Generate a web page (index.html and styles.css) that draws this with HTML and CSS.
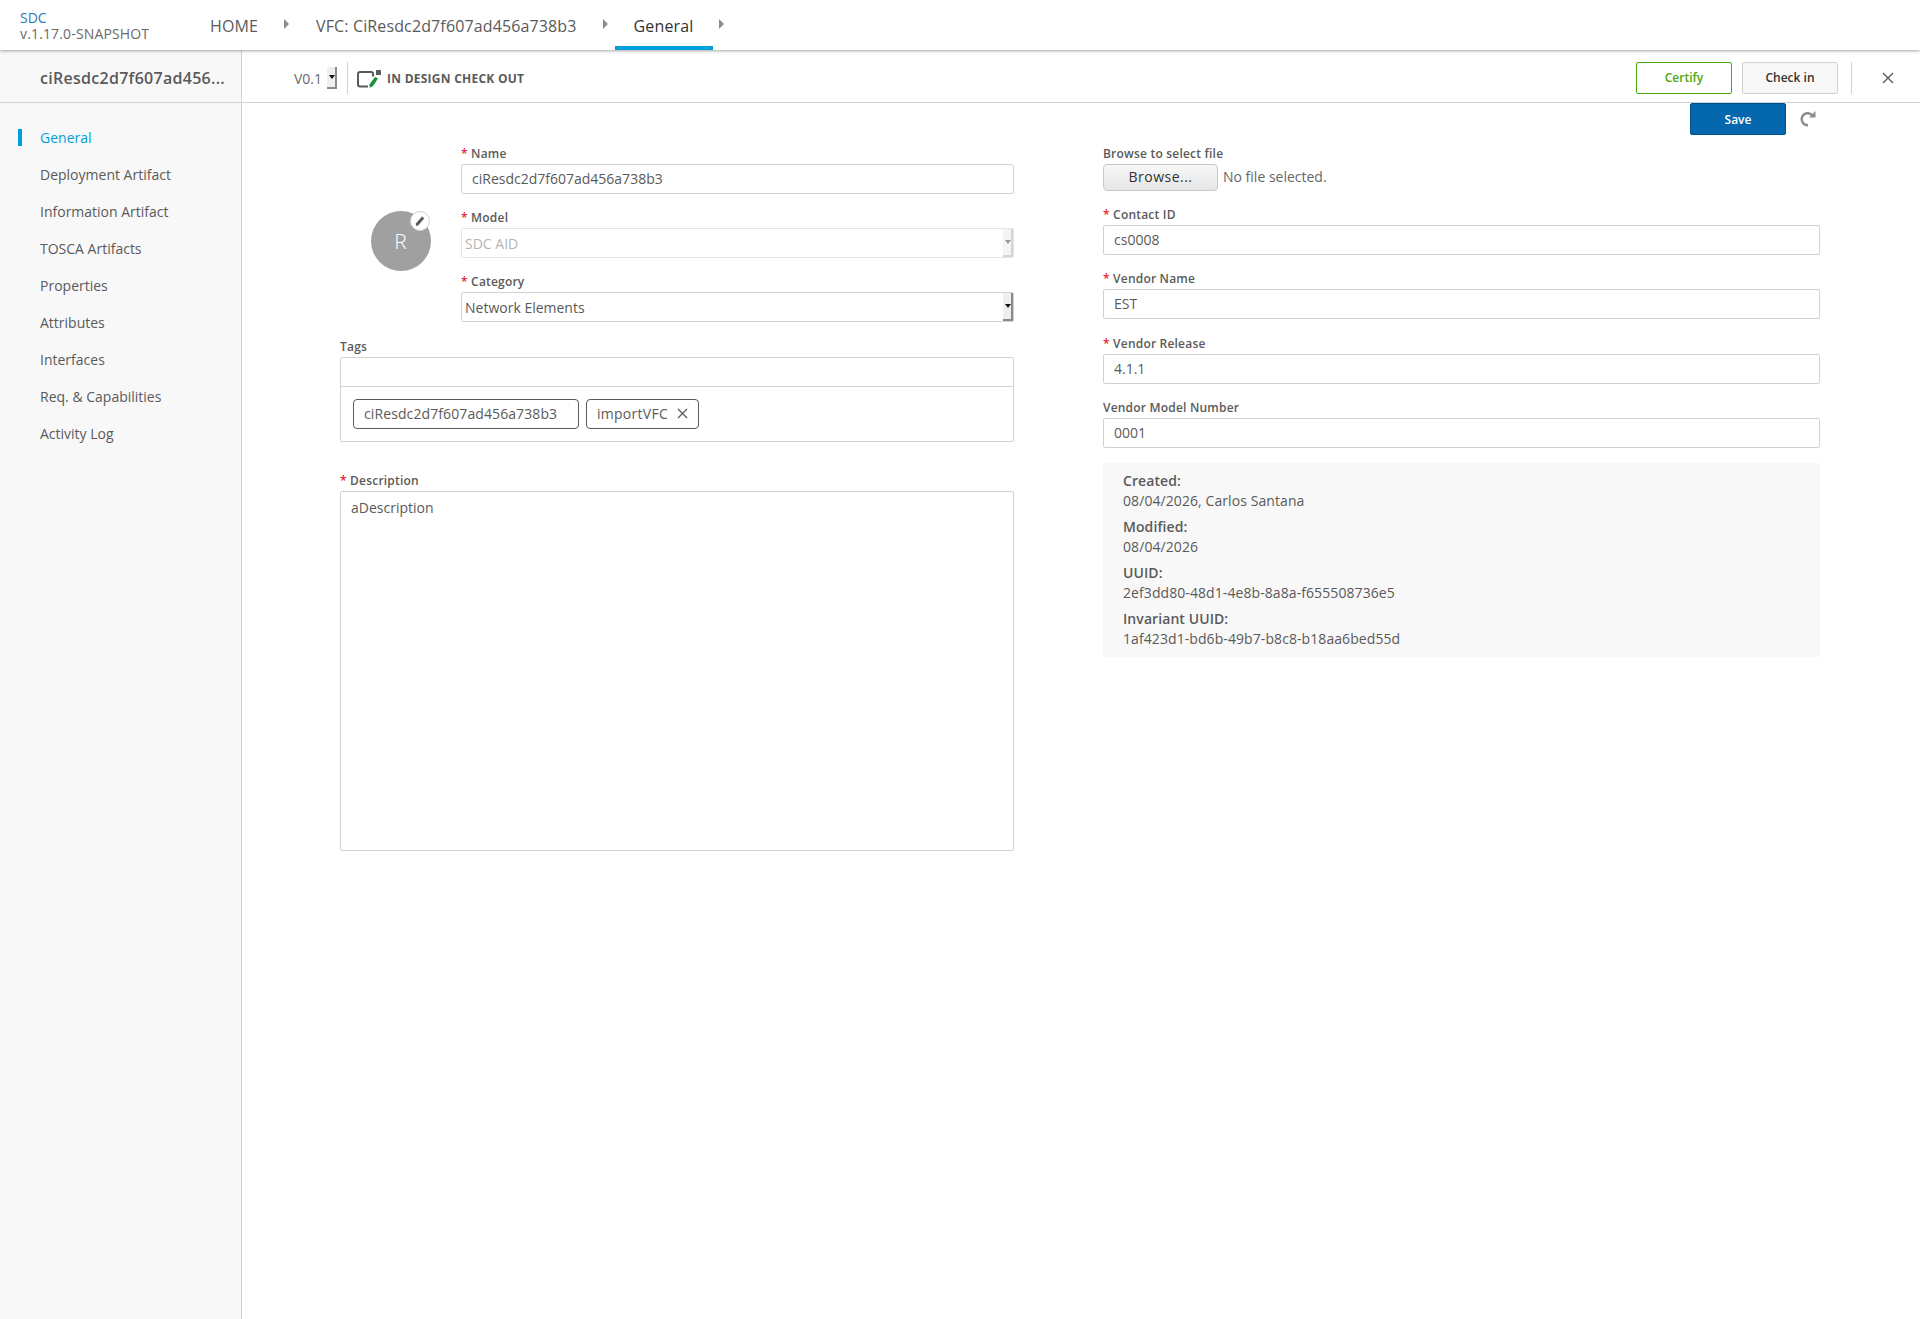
FILE: index.html
```html
<!DOCTYPE html>
<html lang="en">
<head>
    <meta charset="UTF-8">
    <title>SDC - General</title>
    <link rel="stylesheet" href="styles.css">
</head>
<body>
    <header class="top-bar">
        <div class="brand">
            <div class="brand-name">SDC</div>
            <div class="brand-version">v.1.17.0-SNAPSHOT</div>
        </div>
        <nav class="crumbs">
            <a class="crumb">HOME</a>
            <span class="crumb-arrow"></span>
            <a class="crumb">VFC: CiResdc2d7f607ad456a738b3</a>
            <span class="crumb-arrow"></span>
            <a class="crumb crumb-active">General</a>
            <span class="crumb-arrow"></span>
        </nav>
    </header>

    <div class="sub-bar">
        <div class="sub-title">ciResdc2d7f607ad456...</div>
        <div class="sub-main">
            <span class="version">V0.1</span>
            <span class="spin spin-small"></span>
            <span class="sub-sep"></span>
            <svg class="status-icon" width="25" height="18" viewBox="0 0 25 18">
                <path d="M11 16.5H3a2 2 0 0 1-2-2V4a2 2 0 0 1 2-2h11a2 2 0 0 1 2 2v2.5" fill="none" stroke="#5a5a5a" stroke-width="2"/>
                <path d="M18 7l3 1.5-5.2 7.7-3.3 1.6.2-3.6z" fill="#1a8a3c"/>
                <rect x="19" y="0" width="5" height="5" rx="0.5" fill="#5a5a5a"/>
            </svg>
            <span class="status-text">IN DESIGN CHECK OUT</span>
            <div class="sub-actions">
                <button class="btn btn-certify">Certify</button>
                <button class="btn btn-checkin">Check in</button>
                <span class="sub-sep sub-sep-right"></span>
                <svg class="close-icon" width="12" height="12" viewBox="0 0 12 12">
                    <path d="M1 1l10 10M11 1L1 11" stroke="#5a5a5a" stroke-width="1.4" fill="none"/>
                </svg>
            </div>
        </div>
    </div>

    <div class="page">
        <aside class="side-nav">
            <a class="side-item side-active">General</a>
            <a class="side-item">Deployment Artifact</a>
            <a class="side-item">Information Artifact</a>
            <a class="side-item">TOSCA Artifacts</a>
            <a class="side-item">Properties</a>
            <a class="side-item">Attributes</a>
            <a class="side-item">Interfaces</a>
            <a class="side-item">Req. &amp; Capabilities</a>
            <a class="side-item">Activity Log</a>
        </aside>

        <main class="content">
            <div class="save-row">
                <button class="btn btn-save">Save</button>
                <svg class="revert-icon" width="16" height="16" viewBox="0 0 16 16">
                    <path d="M12.4 4.4A6 6 0 1 0 8 14.2" fill="none" stroke="#8c8c8c" stroke-width="2.4"/>
                    <path d="M9 6.5H15.5V0z" fill="#8c8c8c"/>
                </svg>
            </div>

            <form class="form-grid">
                <div class="col-left">
                    <div class="head-block">
                        <div class="avatar-cell">
                            <div class="avatar">R
                                <span class="avatar-edit">
                                    <svg width="10" height="10" viewBox="0 0 10 10">
                                        <path d="M7 .6l2.3 1.6L3.4 9.2.8 10l.3-2.7z" fill="#5a5a5a"/>
                                    </svg>
                                </span>
                            </div>
                        </div>
                        <div class="head-fields">
                            <div class="field">
                                <label class="lbl req">Name</label>
                                <input class="txt" value="ciResdc2d7f607ad456a738b3">
                            </div>
                            <div class="field">
                                <label class="lbl req">Model</label>
                                <div class="pick pick-off">
                                    <select class="pick-value" disabled><option>SDC AID</option></select>
                                    <span class="spin"></span>
                                </div>
                            </div>
                            <div class="field">
                                <label class="lbl req">Category</label>
                                <div class="pick">
                                    <select class="pick-value"><option>Network Elements</option></select>
                                    <span class="spin"></span>
                                </div>
                            </div>
                        </div>
                    </div>

                    <div class="field-tags">
                        <label class="lbl">Tags</label>
                        <div class="tags-box">
                            <input class="tags-input">
                            <div class="tags-list">
                                <span class="tag">ciResdc2d7f607ad456a738b3</span>
                                <span class="tag tag-close">importVFC
                                    <svg width="11" height="11" viewBox="0 0 11 11">
                                        <path d="M1 1l9 9M10 1l-9 9" stroke="#5a5a5a" stroke-width="1.3" fill="none"/>
                                    </svg>
                                </span>
                            </div>
                        </div>
                    </div>

                    <div class="field-desc">
                        <label class="lbl req">Description</label>
                        <textarea class="desc">aDescription</textarea>
                    </div>
                </div>

                <div class="col-right">
                    <div class="field-file">
                        <label class="lbl">Browse to select file</label>
                        <div class="file-row">
                            <button type="button" class="file-btn">Browse...</button>
                            <span class="file-name">No file selected.</span>
                        </div>
                    </div>
                    <div class="field">
                        <label class="lbl req">Contact ID</label>
                        <input class="txt" value="cs0008">
                    </div>
                    <div class="field">
                        <label class="lbl req">Vendor Name</label>
                        <input class="txt" value="EST">
                    </div>
                    <div class="field">
                        <label class="lbl req">Vendor Release</label>
                        <input class="txt" value="4.1.1">
                    </div>
                    <div class="field">
                        <label class="lbl">Vendor Model Number</label>
                        <input class="txt" value="0001">
                    </div>
                    <div class="info-box">
                        <div class="info-item">
                            <div class="info-key">Created:</div>
                            <div>08/04/2026, Carlos Santana</div>
                        </div>
                        <div class="info-item">
                            <div class="info-key">Modified:</div>
                            <div>08/04/2026</div>
                        </div>
                        <div class="info-item">
                            <div class="info-key">UUID:</div>
                            <div>2ef3dd80-48d1-4e8b-8a8a-f655508736e5</div>
                        </div>
                        <div class="info-item">
                            <div class="info-key">Invariant UUID:</div>
                            <div>1af423d1-bd6b-49b7-b8c8-b18aa6bed55d</div>
                        </div>
                    </div>
                </div>
            </form>
        </main>
    </div>
</body>
</html>
```

FILE: styles.css
```css
* {
    box-sizing: border-box;
}
html, body {
    height: 100%;
}
body {
    display: flex;
    flex-direction: column;
    margin: 0;
    overflow: hidden;
    background-color: #fff;
    font-family: "Open Sans", sans-serif;
    font-size: 14px;
    color: #5a5a5a;
}

/* top bar */
.top-bar {
    position: relative;
    z-index: 2;
    display: flex;
    flex: none;
    height: 50px;
    background-color: #fff;
    box-shadow: 0 1px 3px rgba(0, 0, 0, 0.35);
}
.brand {
    width: 190px;
    padding: 9px 0 0 20px;
    line-height: 17px;
}
.brand-name {
    font-size: 14px;
    color: #2e77b5;
}
.brand-version {
    font-size: 14px;
    line-height: 15px;
    letter-spacing: 0.15px;
    color: #6a6a6a;
}
.crumbs {
    display: flex;
}
.crumb {
    display: flex;
    align-items: center;
    height: 50px;
    padding: 2px 20px 0;
    font-size: 16px;
    letter-spacing: 0.13px;
}
.crumb-active {
    padding: 6px 20px 0 19px;
    border-bottom: 4px solid #009fdb;
    color: #333;
}
.crumb-arrow {
    position: relative;
    width: 18px;
    height: 12px;
    margin-top: 18px;
}
.crumb-arrow::after {
    content: "";
    position: absolute;
    left: 6px;
    top: 1px;
    border-left: 5px solid #8c8c8c;
    border-top: 5px solid transparent;
    border-bottom: 5px solid transparent;
}

/* second bar */
.sub-bar {
    display: flex;
    flex: none;
    height: 53px;
    border-bottom: 1px solid #d2d2d2;
}
.sub-title {
    width: 242px;
    padding: 2px 0 0 40px;
    border-right: 1px solid #d2d2d2;
    background-color: #f8f8f8;
    font-size: 16px;
    font-weight: 600;
    line-height: 52px;
    letter-spacing: 0.28px;
    white-space: nowrap;
}
.sub-main {
    display: flex;
    flex: 1;
    align-items: center;
    padding: 3px 26px 0 52px;
}
.version {
    padding-top: 2px;
    font-size: 14px;
    color: #6a6a6a;
}
.spin {
    position: relative;
    flex: none;
    width: 10px;
    height: 100%;
    border-right: 2px solid #8a8a8a;
    border-bottom: 2px solid #8a8a8a;
    background-color: #efefef;
}
.spin::after {
    content: "";
    position: absolute;
    left: 2px;
    top: 50%;
    margin-top: -2px;
    border-top: 4px solid #111;
    border-left: 3px solid transparent;
    border-right: 3px solid transparent;
}
.spin-small {
    height: 22px;
    margin-left: 5px;
}
.sub-sep {
    flex: none;
    width: 1px;
    height: 32px;
    margin: 0 10px;
    background-color: #d2d2d2;
}
.status-icon {
    flex: none;
    margin: 2px 0 0 -1px;
}
.status-text {
    margin-left: 5px;
    padding-top: 2px;
    font-size: 12px;
    font-weight: 700;
    letter-spacing: 0.25px;
}
.sub-actions {
    display: flex;
    align-items: center;
    margin-left: auto;
}
.sub-sep-right {
    margin: 0 30px 0 13px;
}
.btn {
    width: 96px;
    height: 32px;
    border-radius: 2px;
    font-family: inherit;
    font-size: 12px;
    font-weight: 600;
}
.btn-certify {
    border: 1px solid #4ca90c;
    background-color: #fff;
    color: #4ca90c;
}
.btn-checkin {
    margin-left: 10px;
    border: 1px solid #d2d2d2;
    background-color: #f8f8f8;
    color: #333;
}
.btn-save {
    border: 1px solid #004f8a;
    background-color: #0568ae;
    color: #fff;
}

/* page body */
.page {
    display: flex;
    flex: 1;
    min-height: 0;
}
.side-nav {
    display: flex;
    flex: none;
    flex-direction: column;
    width: 242px;
    padding-top: 16px;
    border-right: 1px solid #d2d2d2;
    background-color: #f8f8f8;
}
.side-item {
    display: flex;
    align-items: center;
    height: 37px;
    padding-left: 40px;
    font-size: 14px;
}
.side-active {
    position: relative;
    color: #009fdb;
}
.side-active::before {
    content: "";
    position: absolute;
    left: 18px;
    top: 10px;
    width: 4px;
    height: 17px;
    background-color: #009fdb;
}
.content {
    flex: 1;
    min-width: 0;
}
.save-row {
    display: flex;
    align-items: center;
    justify-content: flex-end;
    height: 32px;
    padding-right: 104px;
}
.revert-icon {
    margin-left: 14px;
}
.form-grid {
    display: flex;
    margin-top: 12px;
    padding-left: 98px;
}
.col-left {
    flex: none;
    width: 674px;
}
.col-right {
    flex: none;
    width: 717px;
    margin-left: 89px;
}
.lbl {
    display: block;
    height: 17px;
    font-size: 12px;
    font-weight: 600;
    line-height: 14px;
    letter-spacing: 0.2px;
}
.req::before {
    content: "* ";
    color: #e8202a;
}
.txt {
    display: block;
    width: 100%;
    height: 30px;
    padding: 0 10px 1px;
    border: 1px solid #d2d2d2;
    border-radius: 2px;
    outline: none;
    font-family: inherit;
    font-size: 14px;
    color: #5a5a5a;
}
.field {
    margin-bottom: 17.33px;
}
.head-block {
    display: flex;
}
.avatar-cell {
    display: flex;
    flex: none;
    align-items: flex-start;
    width: 121px;
    padding: 64px 0 0 31px;
}
.avatar {
    position: relative;
    width: 60px;
    height: 60px;
    padding-right: 1px;
    border-radius: 50%;
    background-color: #a0a0a0;
    font-size: 21px;
    font-weight: 300;
    line-height: 60px;
    text-align: center;
    color: #fff;
}
.avatar-edit {
    position: absolute;
    top: 0;
    right: 1px;
    display: flex;
    align-items: center;
    justify-content: center;
    width: 20px;
    height: 20px;
    border: 1px solid #d2d2d2;
    border-radius: 50%;
    background-color: #fff;
}
.head-fields {
    flex: 1;
}
.head-fields .field {
    margin-bottom: 17px;
}
.head-fields .field:last-child {
    margin-bottom: 18px;
}
.pick {
    display: flex;
    height: 30px;
    border: 1px solid #d2d2d2;
    border-radius: 2px;
}
.pick-value {
    flex: 1;
    padding: 0 0 0 3px;
    border: none;
    outline: none;
    appearance: none;
    background: #fff;
    font-family: inherit;
    font-size: 14px;
    color: #5a5a5a;
}
.pick-off .pick-value {
    color: #b5b5b5;
    opacity: 1;
}
.pick-off {
    border-color: #e6e6e6;
}
.pick-off .spin {
    border-color: #d5d5d5;
    background-color: #f4f4f4;
}
.pick-off .spin::after {
    border-top-color: #999;
}
.tags-box {
    height: 85px;
    border: 1px solid #d2d2d2;
    border-radius: 2px;
}
.tags-input {
    display: block;
    width: 100%;
    height: 29px;
    border: none;
    border-bottom: 1px solid #d2d2d2;
    outline: none;
}
.tags-list {
    display: flex;
    gap: 7px;
    padding: 12px 0 0 12px;
}
.tag {
    display: flex;
    align-items: center;
    gap: 9px;
    height: 30px;
    padding: 0 10px 2px;
    border: 1px solid #5a5a5a;
    border-radius: 4px;
    font-size: 14px;
    letter-spacing: 0.1px;
}
.tag:first-child {
    width: 226px;
}
.tag-close {
    letter-spacing: 0.27px;
}
.field-desc {
    margin-top: 32px;
}
.desc {
    display: block;
    width: 100%;
    height: 360px;
    padding: 6px 10px;
    border: 1px solid #d2d2d2;
    border-radius: 2px;
    outline: none;
    resize: none;
    font-family: inherit;
    font-size: 14px;
    color: #5a5a5a;
}
.field-file {
    margin-bottom: 17px;
}
.file-row {
    display: flex;
    align-items: center;
    gap: 5px;
}
.file-btn {
    width: 115px;
    height: 27px;
    padding: 0 0 2px;
    border: 1px solid #c8c8c8;
    border-radius: 4px;
    background: linear-gradient(#f8f8f8, #e6e6e6);
    font-family: inherit;
    font-size: 14px;
    letter-spacing: 0.5px;
    color: #333;
}
.file-name {
    padding-bottom: 2px;
    font-size: 14px;
    color: #666;
}
.info-box {
    display: flex;
    flex-direction: column;
    gap: 6px;
    margin-top: -2.33px;
    padding: 8px 20px;
    background-color: #f8f8f8;
    font-size: 14px;
    line-height: 20px;
    letter-spacing: 0.08px;
}
.info-key {
    font-weight: 600;
}
```
